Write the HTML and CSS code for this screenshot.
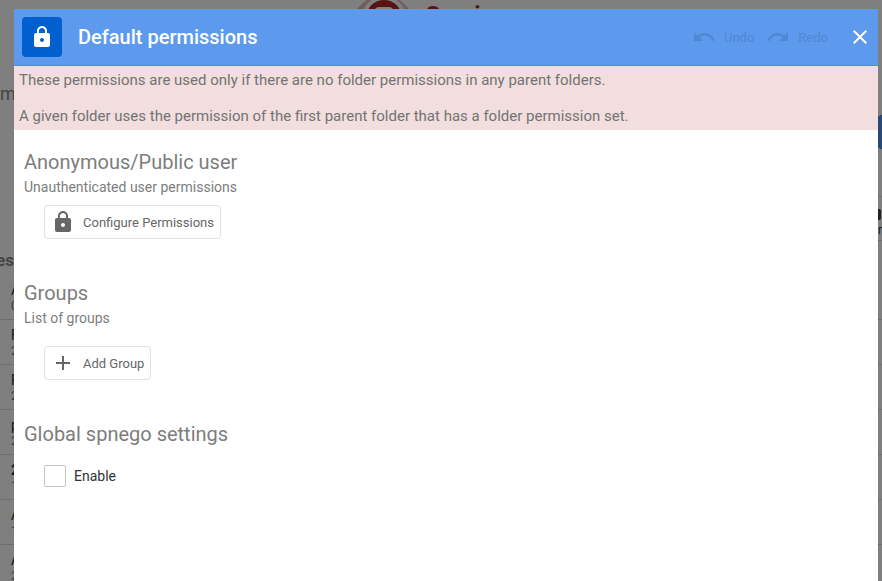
FILE: index.html
```html
<!DOCTYPE html>
<html lang="en">
<head>
    <meta charset="UTF-8">
    <meta name="viewport" content="width=device-width, initial-scale=1.0">
    <title>Default permissions</title>
    <link rel="stylesheet" href="styles.css">
</head>
<body>
<div class="page" aria-hidden="true">
    <div class="brand">
        <svg class="brand-logo" width="60" height="40" viewBox="0 0 60 40">
            <path d="M0 14Q30 -26 60 14Q30 46 0 14z" fill="#e6b8b8"/>
            <circle cx="31" cy="18" r="22" fill="#fff"/>
            <circle cx="31" cy="18" r="18" fill="#ac2828"/>
            <rect x="22" y="7" width="18" height="20" rx="4" fill="#fff"/>
        </svg>
        <span class="brand-name">Services</span>
    </div>
    <div class="crumbs">me</div>
    <div class="actions"><span class="round"></span></div>
    <div class="toolbar">
        <div class="tool"><span class="tool-icon"></span>r</div>
    </div>
    <div class="list-title">es</div>
    <div class="row"><span>A</span><small>0</small></div>
    <div class="row"><span>F</span><small>2</small></div>
    <div class="row"><span>F</span><small>2</small></div>
    <div class="row"><span>p</span><small>2</small></div>
    <div class="row"><b>2</b><small>1</small></div>
    <div class="row"><span>A</span><small>1</small></div>
    <div class="row"><span>A</span><small>2</small></div>
</div>

<div class="overlay">
    <div class="dialog" role="dialog" aria-labelledby="dialogTitle">
        <header class="dialog-header">
            <span class="dialog-icon">
                <svg width="24" height="24" viewBox="0 0 24 24" fill="currentColor"><path d="M18 8h-1V6c0-2.760-2.240-5-5-5S7 3.240 7 6v2H6c-1.100 0-2 .9-2 2v10c0 1.100.9 2 2 2h12c1.100 0 2-.9 2-2V10c0-1.100-.9-2-2-2zm-6 9c-1.100 0-2-.9-2-2s.9-2 2-2 2 .9 2 2-.9 2-2 2zm3.100-9H8.900V6c0-1.710 1.390-3.100 3.100-3.100s3.100 1.390 3.100 3.100v2z"/></svg>
            </span>
            <h1 id="dialogTitle">Default permissions</h1>
            <button class="history" disabled>
                <svg width="24" height="24" viewBox="0 0 24 24" fill="currentColor"><path d="M12.500 8c-2.650 0-5.050.99-6.900 2.600L2 7v9h9l-3.620-3.620c1.390-1.160 3.160-1.880 5.120-1.880 3.540 0 6.550 2.310 7.600 5.500l2.370-.78C21.080 11.030 17.150 8 12.500 8z"/></svg>
                Undo
            </button>
            <button class="history" disabled>
                <svg width="24" height="24" viewBox="0 0 24 24" fill="currentColor"><path d="M18.400 10.600C16.550 8.990 14.150 8 11.500 8c-4.650 0-8.580 3.030-9.960 7.220L3.900 16c1.050-3.190 4.050-5.500 7.600-5.500 1.950 0 3.730.72 5.120 1.880L13 16h9V7l-3.600 3.600z"/></svg>
                Redo
            </button>
            <button class="close" aria-label="Close">
                <svg width="24" height="24" viewBox="0 0 24 24" fill="currentColor"><path d="M19 6.410L17.590 5 12 10.590 6.410 5 5 6.410 10.590 12 5 17.590 6.410 19 12 13.410 17.590 19 19 17.590 13.410 12z"/></svg>
            </button>
        </header>
        <div class="notice">
            <p>These permissions are used only if there are no folder permissions in any parent folders.</p>
            <p>A given folder uses the permission of the first parent folder that has a folder permission set.</p>
        </div>
        <main class="content">
            <section>
                <h2>Anonymous/Public user</h2>
                <p class="hint">Unauthenticated user permissions</p>
                <button class="btn">
                    <svg width="24" height="24" viewBox="0 0 24 24" fill="currentColor"><path d="M18 8h-1V6c0-2.760-2.240-5-5-5S7 3.240 7 6v2H6c-1.100 0-2 .9-2 2v10c0 1.100.9 2 2 2h12c1.100 0 2-.9 2-2V10c0-1.100-.9-2-2-2zm-6 9c-1.100 0-2-.9-2-2s.9-2 2-2 2 .9 2 2-.9 2-2 2zm3.100-9H8.900V6c0-1.710 1.390-3.100 3.100-3.100s3.100 1.390 3.100 3.100v2z"/></svg>
                    Configure Permissions
                </button>
            </section>
            <section>
                <h2>Groups</h2>
                <p class="hint">List of groups</p>
                <div class="groups"></div>
                <button class="btn">
                    <svg width="24" height="24" viewBox="0 0 24 24" fill="currentColor"><path d="M19 13h-6v6h-2v-6H5v-2h6V5h2v6h6v2z"/></svg>
                    Add Group
                </button>
            </section>
            <section>
                <h2>Global spnego settings</h2>
                <label class="check"><input type="checkbox"> Enable</label>
            </section>
        </main>
    </div>
</div>
</body>
</html>
```
FILE: styles.css
```css
* {
    box-sizing: border-box;
}
body {
    margin: 0;
    height: 100vh;
    overflow: hidden;
    font-family: Roboto, "Liberation Sans", sans-serif;
    color: #333;
}
h1, h2, p {
    margin: 0;
}
button {
    font-family: inherit;
    cursor: pointer;
}

/* page under the dialog */
.page {
    height: 100vh;
    overflow: hidden;
    background: #fff;
}
.brand {
    display: flex;
    justify-content: center;
    gap: 12px;
    height: 80px;
    padding-right: 10px;
}
.brand-name {
    font-size: 24px;
    font-weight: bold;
    line-height: 30px;
    color: #ac2828;
}
.crumbs {
    height: 34px;
    font-size: 18px;
    line-height: 28px;
    color: #888;
}
.actions {
    display: flex;
    justify-content: flex-end;
    height: 82px;
}
.round {
    width: 36px;
    height: 36px;
    margin-right: -23px;
    border-radius: 50%;
    background: #5590e6;
}
.toolbar {
    width: 50%;
    display: flex;
    justify-content: flex-end;
    height: 45px;
    margin-left: auto;
    border-top: 1px solid #ddd;
    border-bottom: 1px solid #ddd;
}
.tool {
    display: flex;
    flex-direction: column;
    align-items: flex-end;
    padding-top: 12px;
    font-size: 12px;
    line-height: 20px;
}
.tool-icon {
    width: 16px;
    height: 14px;
    margin-right: 1px;
    border-radius: 2px;
    background: #444;
}
.list-title {
    height: 34px;
    margin-left: -4px;
    padding-top: 9px;
    font-size: 17px;
    font-weight: bold;
    line-height: 20px;
    color: #888;
}
.row {
    display: flex;
    flex-direction: column;
    height: 45px;
    padding: 7px 11px;
    border-bottom: 1px solid #ddd;
    font-size: 14px;
    line-height: 16px;
}
.row small {
    font-size: 12px;
    color: #777;
}

/* dialog */
.overlay {
    position: fixed;
    inset: 0;
    display: flex;
    padding: 9px 4px 0 14px;
    background: rgba(0, 0, 0, 0.5);
}
.dialog {
    flex: 1;
    background: #fff;
}
.dialog-header {
    display: flex;
    align-items: center;
    height: 57px;
    padding: 0 6px 0 8px;
    border-bottom: 1px solid #4e88dc;
    background: #5d9aed;
    color: #fff;
}
.dialog-icon {
    display: flex;
    align-items: center;
    justify-content: center;
    width: 40px;
    height: 40px;
    border-radius: 4px;
    background: #0060d0;
}
.dialog-header h1 {
    flex: 1;
    margin-left: 16px;
    font-size: 20px;
    font-weight: 500;
}
.history {
    display: flex;
    align-items: center;
    gap: 8px;
    margin-right: 12px;
    padding: 0;
    border: 0;
    background: none;
    font-size: 13px;
    color: #4f87d3;
}
.close {
    display: flex;
    margin-left: 8px;
    padding: 0;
    border: 0;
    background: none;
    color: #fff;
}
.notice {
    padding: 5px 5px 4px;
    background: #f2dede;
    font-size: 15px;
    line-height: 19px;
    color: #737373;
}
.notice p + p {
    margin-top: 17px;
}
.content {
    padding: 20px 10px;
}
section {
    margin-bottom: 42px;
}
h2 {
    font-size: 20px;
    font-weight: 400;
    line-height: 24px;
    color: #7d7d7d;
}
.hint {
    font-size: 14px;
    line-height: 26px;
    color: #7d7d7d;
}
.groups {
    min-height: 10px;
}
.btn {
    display: flex;
    align-items: center;
    gap: 8px;
    height: 34px;
    margin: 5px 0 0 20px;
    padding: 0 6px;
    border: 1px solid #e0e0e0;
    border-radius: 4px;
    background: #fff;
    font-size: 13px;
    color: #666;
}
.check {
    display: inline-flex;
    align-items: center;
    gap: 8px;
    margin: 18px 0 0 20px;
    font-size: 14px;
    line-height: 24px;
    color: #333;
}
.check input {
    appearance: none;
    width: 22px;
    height: 22px;
    margin: 0;
    border: 1px solid #c4c4c4;
    border-radius: 2px;
    background: #fff;
}
.check input:checked {
    background: #5d9aed;
}
```
